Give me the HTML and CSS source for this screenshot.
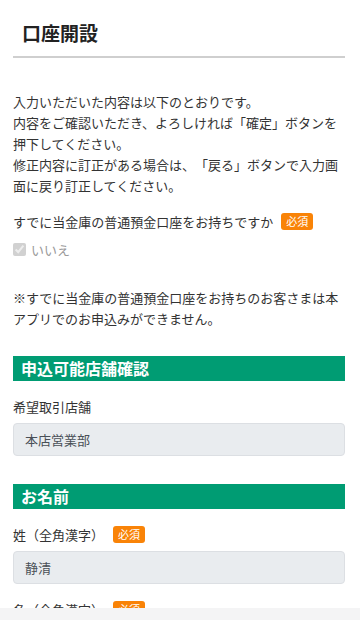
FILE: index.html
```html
<!DOCTYPE html>
<html lang="ja">
<head>
    <meta charset="UTF-8">
    <meta name="viewport" content="width=device-width, initial-scale=1.0">
    <title>口座開設</title>
    <link rel="stylesheet" href="styles.css">
</head>
<body>
    <header class="page-header">
        <h1 class="page-title">口座開設</h1>
    </header>

    <main class="content">
        <p class="intro">
            入力いただいた内容は以下のとおりです。<br>
            内容をご確認いただき、よろしければ「確定」ボタンを押下してください。<br>
            修正内容に訂正がある場合は、「戻る」ボタンで入力画面に戻り訂正してください。
        </p>

        <div class="question">
            <span>すでに当金庫の普通預金口座をお持ちですか</span>
            <span class="badge">必須</span>
        </div>
        <label class="check">
            <input type="checkbox" checked disabled>
            <span>いいえ</span>
        </label>

        <p class="note">※すでに当金庫の普通預金口座をお持ちのお客さまは本アプリでのお申込みができません。</p>

        <h2 class="section-title">申込可能店舗確認</h2>
        <div class="field">
            <div class="field__label">希望取引店舗</div>
            <div class="field__value">本店営業部</div>
        </div>

        <h2 class="section-title">お名前</h2>
        <div class="field">
            <div class="field__label">姓（全角漢字）<span class="badge badge--gap">必須</span></div>
            <div class="field__value">静清</div>
        </div>
        <div class="field">
            <div class="field__label">名（全角漢字）<span class="badge badge--gap">必須</span></div>
            <div class="field__value">太郎</div>
        </div>
    </main>

    <footer class="footer-bar"></footer>
</body>
</html>
```

FILE: styles.css
```css
* {
    margin: 0;
    padding: 0;
    box-sizing: border-box;
}
body {
    font-family: "Noto Sans CJK JP", "Noto Sans", sans-serif;
    font-size: 13px;
    line-height: 21px;
    color: #333333;
    background-color: #ffffff;
    text-spacing-trim: space-all;
}
.page-header {
    margin: 0 15px 0 13px;
    padding: 18px 0 8px 9px;
    border-bottom: 2px solid #cfcfcf;
}
.page-title {
    font-size: 19px;
    line-height: 30px;
    font-weight: bold;
    color: #222222;
}
.content {
    padding: 33px 15px 40px 13px;
}
.intro {
    margin-bottom: 15px;
}
.question {
    display: flex;
    align-items: center;
}
.badge {
    display: inline-block;
    margin-left: 8px;
    padding: 0 5px;
    font-size: 11px;
    line-height: 17px;
    color: #ffffff;
    background-color: #f98307;
    border-radius: 3px;
}
.badge--gap {
    margin-left: 9px;
    vertical-align: 1px;
}
.check {
    display: flex;
    align-items: center;
    gap: 5px;
    margin-top: 7px;
    color: #9a9a9a;
}
.check input {
    width: 13px;
    height: 13px;
    margin: 0;
}
.note {
    margin-top: 27px;
}
.section-title {
    margin-top: 27px;
    padding: 0 8px;
    font-size: 16px;
    line-height: 25px;
    font-weight: bold;
    color: #ffffff;
    background-color: #009c73;
}
.field {
    margin-top: 15px;
}
.field__label {
    line-height: 21px;
}
.field__value {
    margin-top: 6px;
    padding: 0 11px;
    height: 33px;
    line-height: 31px;
    color: #495057;
    background-color: #e9ecef;
    border: 1px solid #dcdfe3;
    border-radius: 4px;
}
.field + .section-title {
    margin-top: 28px;
}
.footer-bar {
    position: fixed;
    left: 0;
    right: 0;
    bottom: 0;
    height: 12px;
    background-color: #f4f4f5;
}
```
